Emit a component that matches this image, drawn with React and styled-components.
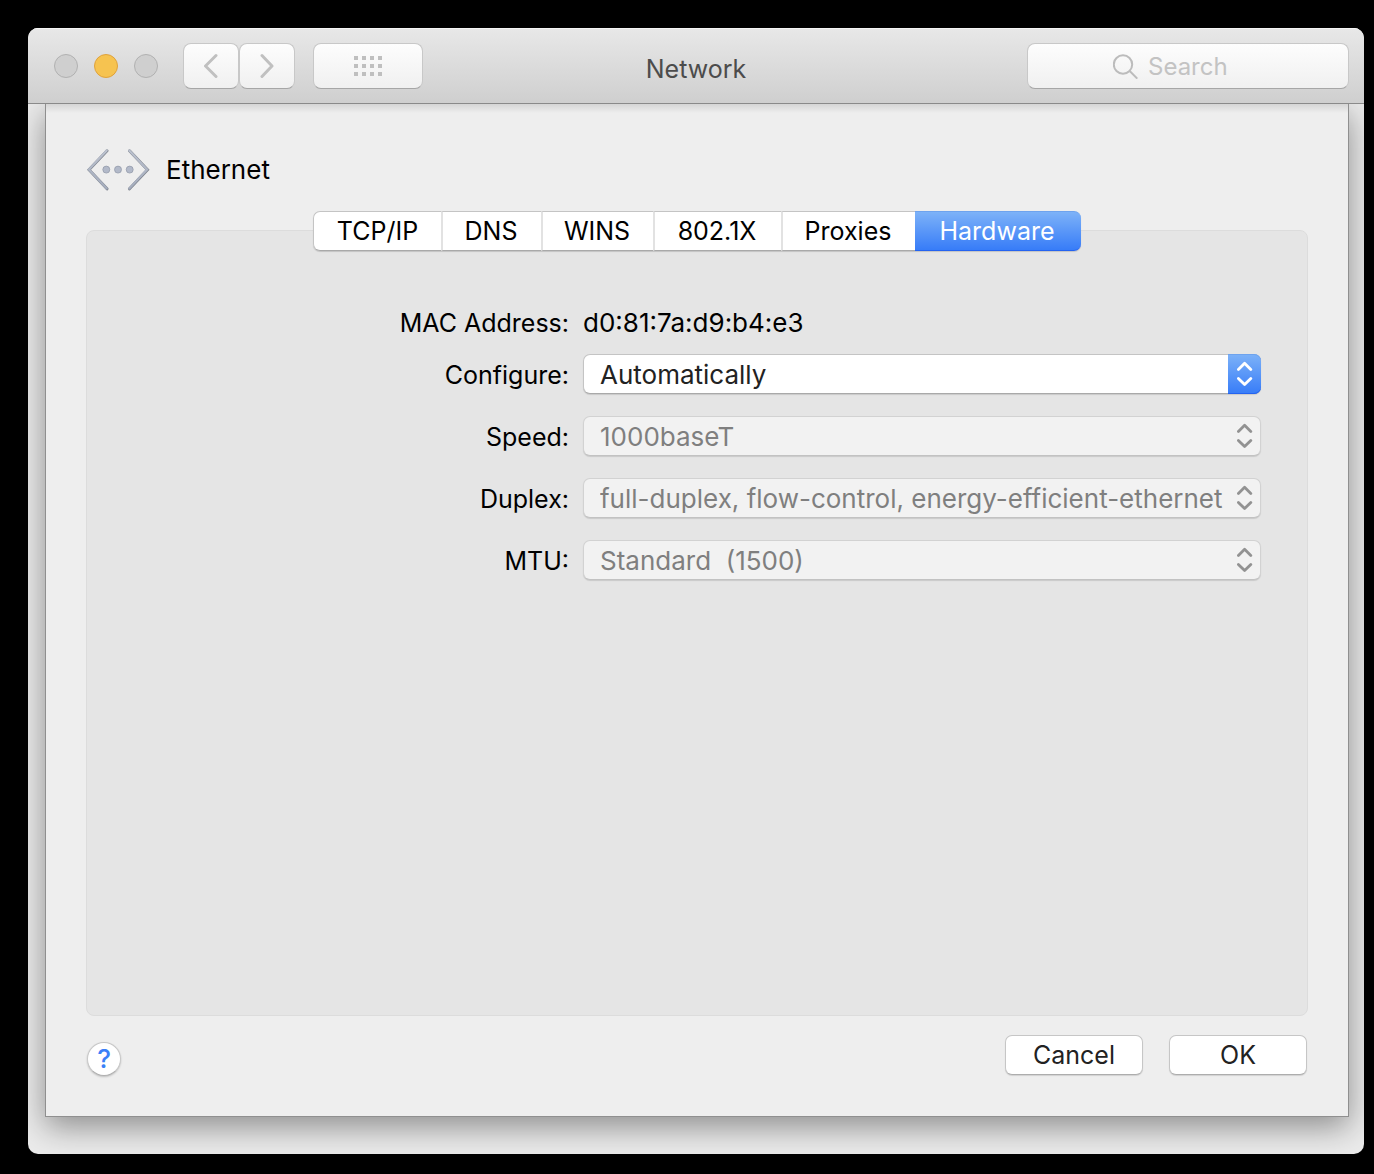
import React from 'react';
import styled, { createGlobalStyle } from 'styled-components';

const GlobalStyle = createGlobalStyle`
  * {
    box-sizing: border-box;
  }

  body {
    margin: 0;
    background: #000;
  }

  body, button, input, select {
    font-family: Inter, 'Liberation Sans', sans-serif;
    font-size: 25px;
    line-height: 30px;
  }
`;

const Desktop = styled.div`
  display: flex;
  min-height: 100vh;
  padding: 28px 10px 20px 28px;
`;

const Window = styled.main`
  flex: 1;
  display: flex;
  flex-direction: column;
  min-width: 0;
  overflow: hidden;
  border-radius: 10px;
  background: #ebebeb;
`;

const TitleBar = styled.header`
  position: relative;
  z-index: 1;
  display: grid;
  grid-template-columns: 1fr auto 1fr;
  align-items: center;
  height: 76px;
  padding: 0 15px;
  border-bottom: 1px solid #8a8a8a;
  background: linear-gradient(#e8e8e8, #cfcfcf);
  box-shadow: inset 0 1px #f5f5f5;
`;

const Controls = styled.div`
  display: flex;
  align-items: center;
`;

const Lights = styled.div`
  display: flex;
  gap: 16px;
  margin: 0 25px 0 11px;
`;

const Light = styled.button`
  width: 24px;
  height: 24px;
  padding: 0;
  border: 1px solid ${({ $active }) => ($active ? '#dfa23c' : '#b1b1b1')};
  border-radius: 50%;
  background: ${({ $active }) => ($active ? '#f6c350' : '#cfcfcf')};
`;

const ToolButton = styled.button`
  display: flex;
  align-items: center;
  justify-content: center;
  width: ${({ $wide }) => ($wide ? '110px' : '56px')};
  height: 46px;
  margin-left: ${({ $wide }) => ($wide ? '18px' : '0')};
  padding: 0;
  border: 1px solid #c8c8c8;
  border-bottom-color: #a6a6a6;
  border-radius: 8px;
  background: linear-gradient(#fdfdfd, #f0f0f0);
`;

const Title = styled.h1`
  margin: 0;
  padding-top: 6px;
  font-size: 25px;
  font-weight: 400;
  color: #4c4c4c;
`;

const SearchBox = styled.label`
  justify-self: end;
  display: flex;
  align-items: center;
  gap: 9px;
  width: 322px;
  height: 46px;
  padding: 0 8px 0 85px;
  border: 1px solid #c8c8c8;
  border-bottom-color: #a6a6a6;
  border-radius: 8px;
  background: linear-gradient(#fdfdfd, #f0f0f0);
`;

const SearchInput = styled.input`
  flex: 1;
  min-width: 0;
  padding: 3px 0 0;
  border: 0;
  outline: 0;
  background: none;
  font-size: 24px;

  &::placeholder {
    color: #c3c3c3;
    opacity: 1;
  }
`;

const Sheet = styled.section`
  flex: 1;
  display: flex;
  flex-direction: column;
  margin: 0 15px 37px 17px;
  padding: 45px 40px 40px;
  border: 1px solid #8f8f8f;
  border-top: 0;
  background: linear-gradient(#d5d5d5, #eee 9px);
  box-shadow: 0 10px 30px rgba(0, 0, 0, 0.4);
`;

const Service = styled.div`
  display: flex;
  align-items: center;
  gap: 16px;
  height: 42px;
  margin-bottom: 20px;
  padding-left: 1px;
`;

const ServiceName = styled.h2`
  margin: 0;
  font-size: 26px;
  font-weight: 400;
`;

const Tabs = styled.div`
  z-index: 1;
  align-self: center;
  display: grid;
  grid-template-columns: 128px 100px 112px 128px 134px 166px;
  height: 40px;
  margin-bottom: -21px;
  border-radius: 7px;
  box-shadow: 0 1px 1px rgba(0, 0, 0, 0.15);
`;

const Tab = styled.button`
  padding: 0;
  border: 1px solid #c4c4c4;
  border-width: 1px 0 1px 1px;
  border-bottom-color: #a9a9a9;
  background: #fff;
  color: #000;

  & + & {
    padding-right: 2px;
    border-left: 2px solid #e2e2e2;
  }

  &:first-child {
    border-radius: 7px 0 0 7px;
  }

  &[aria-selected='true'] {
    border: 1px solid #6ea3ee;
    border-width: 1px 0;
    border-bottom-color: #2463f0;
    border-radius: 0 7px 7px 0;
    background: linear-gradient(#7db2f8, #377cf8);
    color: #fff;
  }
`;

const Panel = styled.div`
  flex: 1;
  padding: 72px 46px 72px 0;
  border: 1px solid #dcdcdc;
  border-radius: 8px;
  background: #e5e5e5;
`;

const Row = styled.div`
  display: grid;
  grid-template-columns: minmax(180px, 482px) 1fr;
  column-gap: 14px;
  align-items: center;
  height: 40px;
  margin-bottom: ${({ $tight }) => ($tight ? '11px' : '22px')};
`;

const Label = styled.label`
  text-align: right;
`;

const Value = styled.output`
  font-size: 26px;
`;

const SelectLabel = styled(Label)`
  padding-top: 2px;
`;

const SelectWrap = styled.div`
  position: relative;
`;

const Select = styled.select`
  display: block;
  width: 100%;
  height: 40px;
  padding: 2px 34px 0 16px;
  border: 1px solid #c4c4c4;
  border-bottom-color: #a9a9a9;
  border-radius: 7px;
  appearance: none;
  background: #fff;
  box-shadow: 0 1px 1px rgba(0, 0, 0, 0.12);
  color: #222;
  font-size: 26px;
  white-space: pre;

  &:disabled {
    border-color: #d2d2d2;
    border-bottom-color: #c2c2c2;
    background: #f2f2f2;
    color: #7f7f7f;
    opacity: 1;
  }
`;

const Stepper = styled.span`
  position: absolute;
  top: 0;
  right: 0;
  display: flex;
  align-items: center;
  justify-content: center;
  width: 33px;
  height: 40px;
  border-radius: 0 7px 7px 0;
  color: ${({ $disabled }) => ($disabled ? '#929292' : '#fff')};
  background: ${({ $disabled }) => ($disabled ? 'none' : 'linear-gradient(#7db2f8, #377cf8)')};
  box-shadow: ${({ $disabled }) => ($disabled ? 'none' : 'inset 0 -1px #2463f0, inset 0 1px #6ea3ee')};
  pointer-events: none;
`;

const Footer = styled.footer`
  display: flex;
  align-items: flex-start;
  gap: 26px;
  height: 41px;
  margin-top: 19px;
  padding: 0 1px;
`;

const HelpButton = styled.button`
  align-self: flex-end;
  width: 34px;
  height: 34px;
  margin-right: auto;
  padding: 0;
  border: 1px solid #c8c8c8;
  border-bottom-color: #b0b0b0;
  border-radius: 50%;
  background: #fff;
  box-shadow: 0 1px 2px rgba(0, 0, 0, 0.2);
  color: #3a80f7;
  font-size: 26px;
  font-weight: 500;
`;

const PushButton = styled.button`
  width: 138px;
  height: 40px;
  padding: 0;
  border: 1px solid #c6c6c6;
  border-bottom-color: #adadad;
  border-radius: 7px;
  background: #fff;
  box-shadow: 0 1px 1px rgba(0, 0, 0, 0.12);
  color: #222;
`;

const tabs = ['TCP/IP', 'DNS', 'WINS', '802.1X', 'Proxies', 'Hardware'];

const fields = [
  { id: 'configure', label: 'Configure:', value: 'Automatically' },
  { id: 'speed', label: 'Speed:', value: '1000baseT', disabled: true },
  {
    id: 'duplex',
    label: 'Duplex:',
    value: 'full-duplex, flow-control, energy-efficient-ethernet',
    disabled: true,
  },
  { id: 'mtu', label: 'MTU:', value: 'Standard\u00a0 (1500)', disabled: true },
];

function Chevron({ flip }) {
  return (
    <svg width="14" height="26" viewBox="0 0 14 26" fill="none" stroke="#c0c0c0" strokeWidth="3" strokeLinecap="round" strokeLinejoin="round">
      <path d={flip ? 'M2 2.5l10 10.5L2 23.5' : 'M12 2.5L1.5 13 12 23.5'} />
    </svg>
  );
}

function GridIcon() {
  const dots = [];
  for (let y = 0; y < 3; y += 1) {
    for (let x = 0; x < 4; x += 1) {
      dots.push(<rect key={`${x}-${y}`} x={x * 8} y={y * 8} width="4" height="4" />);
    }
  }
  return (
    <svg width="28" height="20" viewBox="0 0 28 20" fill="#bfbfbf">
      {dots}
    </svg>
  );
}

function SearchIcon() {
  return (
    <svg width="26" height="26" viewBox="0 0 26 26" fill="none" stroke="#bcbcbc" strokeWidth="2">
      <circle cx="10" cy="11.5" r="9.2" />
      <path d="M16.7 18l7.6 7.6" />
    </svg>
  );
}

function EthernetIcon() {
  return (
    <svg width="63" height="42" viewBox="0 0 63 42">
      <defs>
        <linearGradient id="steel" x1="0" y1="0" x2="0" y2="42" gradientUnits="userSpaceOnUse">
          <stop offset="0" stopColor="#bcc2cf" />
          <stop offset="1" stopColor="#a3abbc" />
        </linearGradient>
      </defs>
      <g fill="none" strokeLinecap="round" strokeLinejoin="miter">
        <g stroke="#7f858f" strokeWidth="3">
          <path d="M20 1.8L2 20.8l18 19" />
          <path d="M42.5 1.8l18 19-18 19" />
        </g>
        <g stroke="url(#steel)" strokeWidth="2.2">
          <path d="M19.7 1.6L1.9 20.6l17.8 18.8" />
          <path d="M42.3 1.6l17.8 19-17.8 18.8" />
        </g>
      </g>
      {[19.3, 31, 42.7].map((cx) => (
        <circle key={cx} cx={cx} cy="20.6" r="3.5" fill="#b2b9c9" stroke="#8f97a6" strokeWidth="0.7" />
      ))}
    </svg>
  );
}

function StepperIcon() {
  return (
    <svg width="16" height="26" viewBox="0 0 16 26" fill="none" stroke="currentColor" strokeWidth="2.8" strokeLinecap="round" strokeLinejoin="round">
      <path d="M1.4 8.4L7.6 2.2l6.2 6.2M1.4 17.4l6.2 6.2 6.2-6.2" />
    </svg>
  );
}

function SelectRow({ id, label, value, disabled }) {
  return (
    <Row>
      <SelectLabel htmlFor={id}>{label}</SelectLabel>
      <SelectWrap>
        <Select id={id} defaultValue={value} disabled={disabled}>
          <option value={value}>{value}</option>
        </Select>
        <Stepper $disabled={disabled}>
          <StepperIcon />
        </Stepper>
      </SelectWrap>
    </Row>
  );
}

export default function App() {
  return (
    <Desktop>
      <GlobalStyle />
      <Window>
        <TitleBar>
          <Controls>
            <Lights>
              <Light aria-label="Close" />
              <Light $active aria-label="Minimize" />
              <Light aria-label="Zoom" />
            </Lights>
            <ToolButton aria-label="Back">
              <Chevron />
            </ToolButton>
            <ToolButton aria-label="Forward">
              <Chevron flip />
            </ToolButton>
            <ToolButton $wide aria-label="Show all">
              <GridIcon />
            </ToolButton>
          </Controls>
          <Title>Network</Title>
          <SearchBox>
            <SearchIcon />
            <SearchInput type="text" placeholder="Search" aria-label="Search" />
          </SearchBox>
        </TitleBar>
        <Sheet>
          <Service>
            <EthernetIcon />
            <ServiceName>Ethernet</ServiceName>
          </Service>
          <Tabs role="tablist">
            {tabs.map((name) => (
              <Tab key={name} role="tab" aria-selected={name === 'Hardware'}>
                {name}
              </Tab>
            ))}
          </Tabs>
          <Panel role="tabpanel">
            <Row $tight>
              <Label htmlFor="mac">MAC Address:</Label>
              <Value id="mac">d0:81:7a:d9:b4:e3</Value>
            </Row>
            {fields.map((field) => (
              <SelectRow key={field.id} {...field} />
            ))}
          </Panel>
          <Footer>
            <HelpButton aria-label="Help">?</HelpButton>
            <PushButton>Cancel</PushButton>
            <PushButton>OK</PushButton>
          </Footer>
        </Sheet>
      </Window>
    </Desktop>
  );
}
